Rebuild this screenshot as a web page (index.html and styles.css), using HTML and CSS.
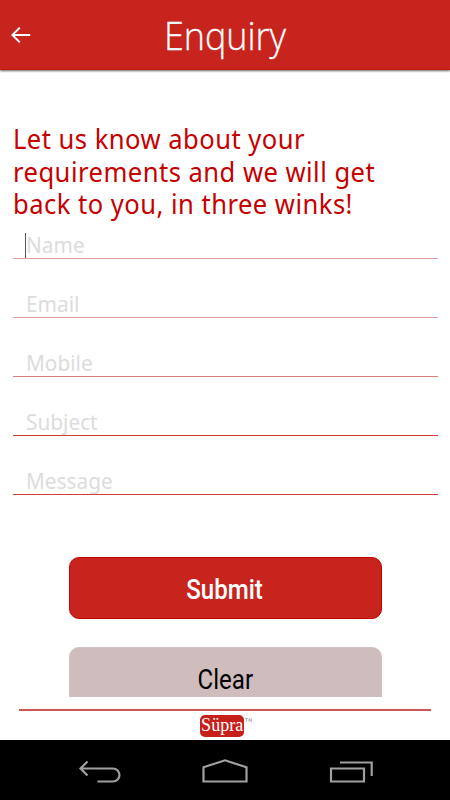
FILE: index.html
```
<!DOCTYPE html>
<html lang="en">
<head>
    <meta charset="UTF-8">
    <meta name="viewport" content="width=device-width, initial-scale=1.0">
    <title>Enquiry</title>
    <link rel="stylesheet" href="styles.css">
</head>
<body>
    <header class="topbar">
        <svg class="back" viewBox="0 0 20 18" fill="none" stroke="#fff" stroke-width="2">
            <path d="M19.2 9H1.2M8.8 1.6L1.4 9L8.8 16.4"/>
        </svg>
        <h1>Enquiry</h1>
    </header>
    <main>
        <p class="intro">Let us know about your<br>requirements and we will get<br>back to you, in three winks!</p>
        <div class="form">
            <div class="field soft name"><label>Name</label></div>
            <div class="field soft"><label>Email</label></div>
            <div class="field mid"><label>Mobile</label></div>
            <div class="field"><label>Subject</label></div>
            <div class="field"><label>Message</label></div>
        </div>
        <div class="buttons">
            <button class="btn btn-submit"><span>Submit</span></button>
            <button class="btn btn-clear"><span>Clear</span></button>
        </div>
    </main>
    <footer class="brand">
        <span class="logo"><span>Süpra</span></span>
        <svg class="tm" viewBox="0 0 7 4" fill="none" stroke="#aaa" stroke-width="0.8">
            <path d="M0 .5H3M1.5 .5V4M4 4V.5L5.2 3L6.4 .5V4"/>
        </svg>
    </footer>
    <nav class="navbar">
        <svg viewBox="0 0 340 60" fill="none" stroke="#a0a0a0" stroke-width="2.2">
            <path d="M27.5 21.5L20.5 28.5L27.5 35.5M20.8 28.5H53A6.5 6.5 0 0 1 53 41.5H37.5"/>
            <path d="M143.5 41.5V27.3L165 20.3L186.5 27.3V41.5Z"/>
            <path d="M271 28.5H304V41.5H271ZM280 22.5H311.7V36"/>
        </svg>
    </nav>
</body>
</html>
```

FILE: styles.css
```
* {
    box-sizing: border-box;
}
body {
    margin: 0;
    height: 800px;
    display: flex;
    flex-direction: column;
    overflow: hidden;
    background: #fff;
    font-family: "Noto Sans", "Open Sans", sans-serif;
}
.topbar {
    flex: none;
    height: 70px;
    display: grid;
    grid-template-columns: 40px 1fr 40px;
    align-items: center;
    background: #c7241d;
    border-bottom: 1px solid #c7160c;
    box-shadow: 0 1px 2px #666;
}
.back {
    width: 20px;
    height: 18px;
    margin: 1px 0 0 11px;
}
h1 {
    margin: 0;
    text-align: center;
    color: #fff;
    font: 300 38px/52px "Open Sans", sans-serif;
    -webkit-text-stroke: 0.3px #fff;
    transform: scaleX(0.945);
}
main {
    flex: none;
    height: 627px;
    padding: 53px 12px 0 13px;
    overflow: hidden;
}
.intro {
    margin: 0;
    color: #c60000;
    font-size: 27px;
    line-height: 32.5px;
    letter-spacing: 0.5px;
    white-space: nowrap;
    transform: scaleX(0.947);
    transform-origin: left;
}
.field {
    position: relative;
    height: 59px;
    padding: 29px 0 0 13px;
    border-bottom: 1px solid #d03c3c;
    color: #dcdcdc;
    font-size: 22px;
    line-height: 30px;
}
.field label {
    display: inline-block;
    transform: scaleX(0.945);
    transform-origin: left;
}
.field.soft {
    border-color: #dda0a0;
}
.field.mid {
    border-color: #d88080;
}
.field.name {
    height: 38.5px;
    padding-top: 8px;
}
/* text cursor in the focused field */
.field.name::before {
    content: "";
    position: absolute;
    left: 12px;
    top: 12px;
    width: 1px;
    height: 25px;
    background: #555;
}
.buttons {
    display: flex;
    flex-direction: column;
    align-items: center;
    gap: 28px;
    padding: 62px 1px 0 0;
}
.btn {
    width: 313px;
    height: 62px;
    padding: 3px 0 0;
    border: 1px solid #c60000;
    border-radius: 10px;
    background: #c7241d;
    color: #fff;
    font: 500 28px Roboto, sans-serif;
}
.btn span {
    display: inline-block;
    transform: scaleX(0.86);
}
.btn-clear {
    border-color: #d2bfc0;
    background: #cfbdbd;
    color: #000;
    font-weight: 400;
}
.brand {
    flex: none;
    height: 31px;
    margin: 12px 19px 0;
    border-top: 2px solid #cf5555;
    display: flex;
    justify-content: center;
    padding: 4px 0 0 2px;
}
.logo {
    width: 44px;
    height: 22px;
    border-radius: 5px;
    background: #c6201b;
    color: #fff;
    font: 19px/19px "Liberation Serif", serif;
    text-align: center;
}
.logo span {
    display: inline-block;
    transform: scaleX(0.95);
}
.tm {
    width: 7px;
    height: 4px;
    margin: 3px 0 0 1px;
}
.navbar {
    flex: none;
    height: 60px;
    padding: 0 50px 0 60px;
    background: #000;
}
.navbar svg {
    display: block;
    width: 340px;
    height: 60px;
}
```
